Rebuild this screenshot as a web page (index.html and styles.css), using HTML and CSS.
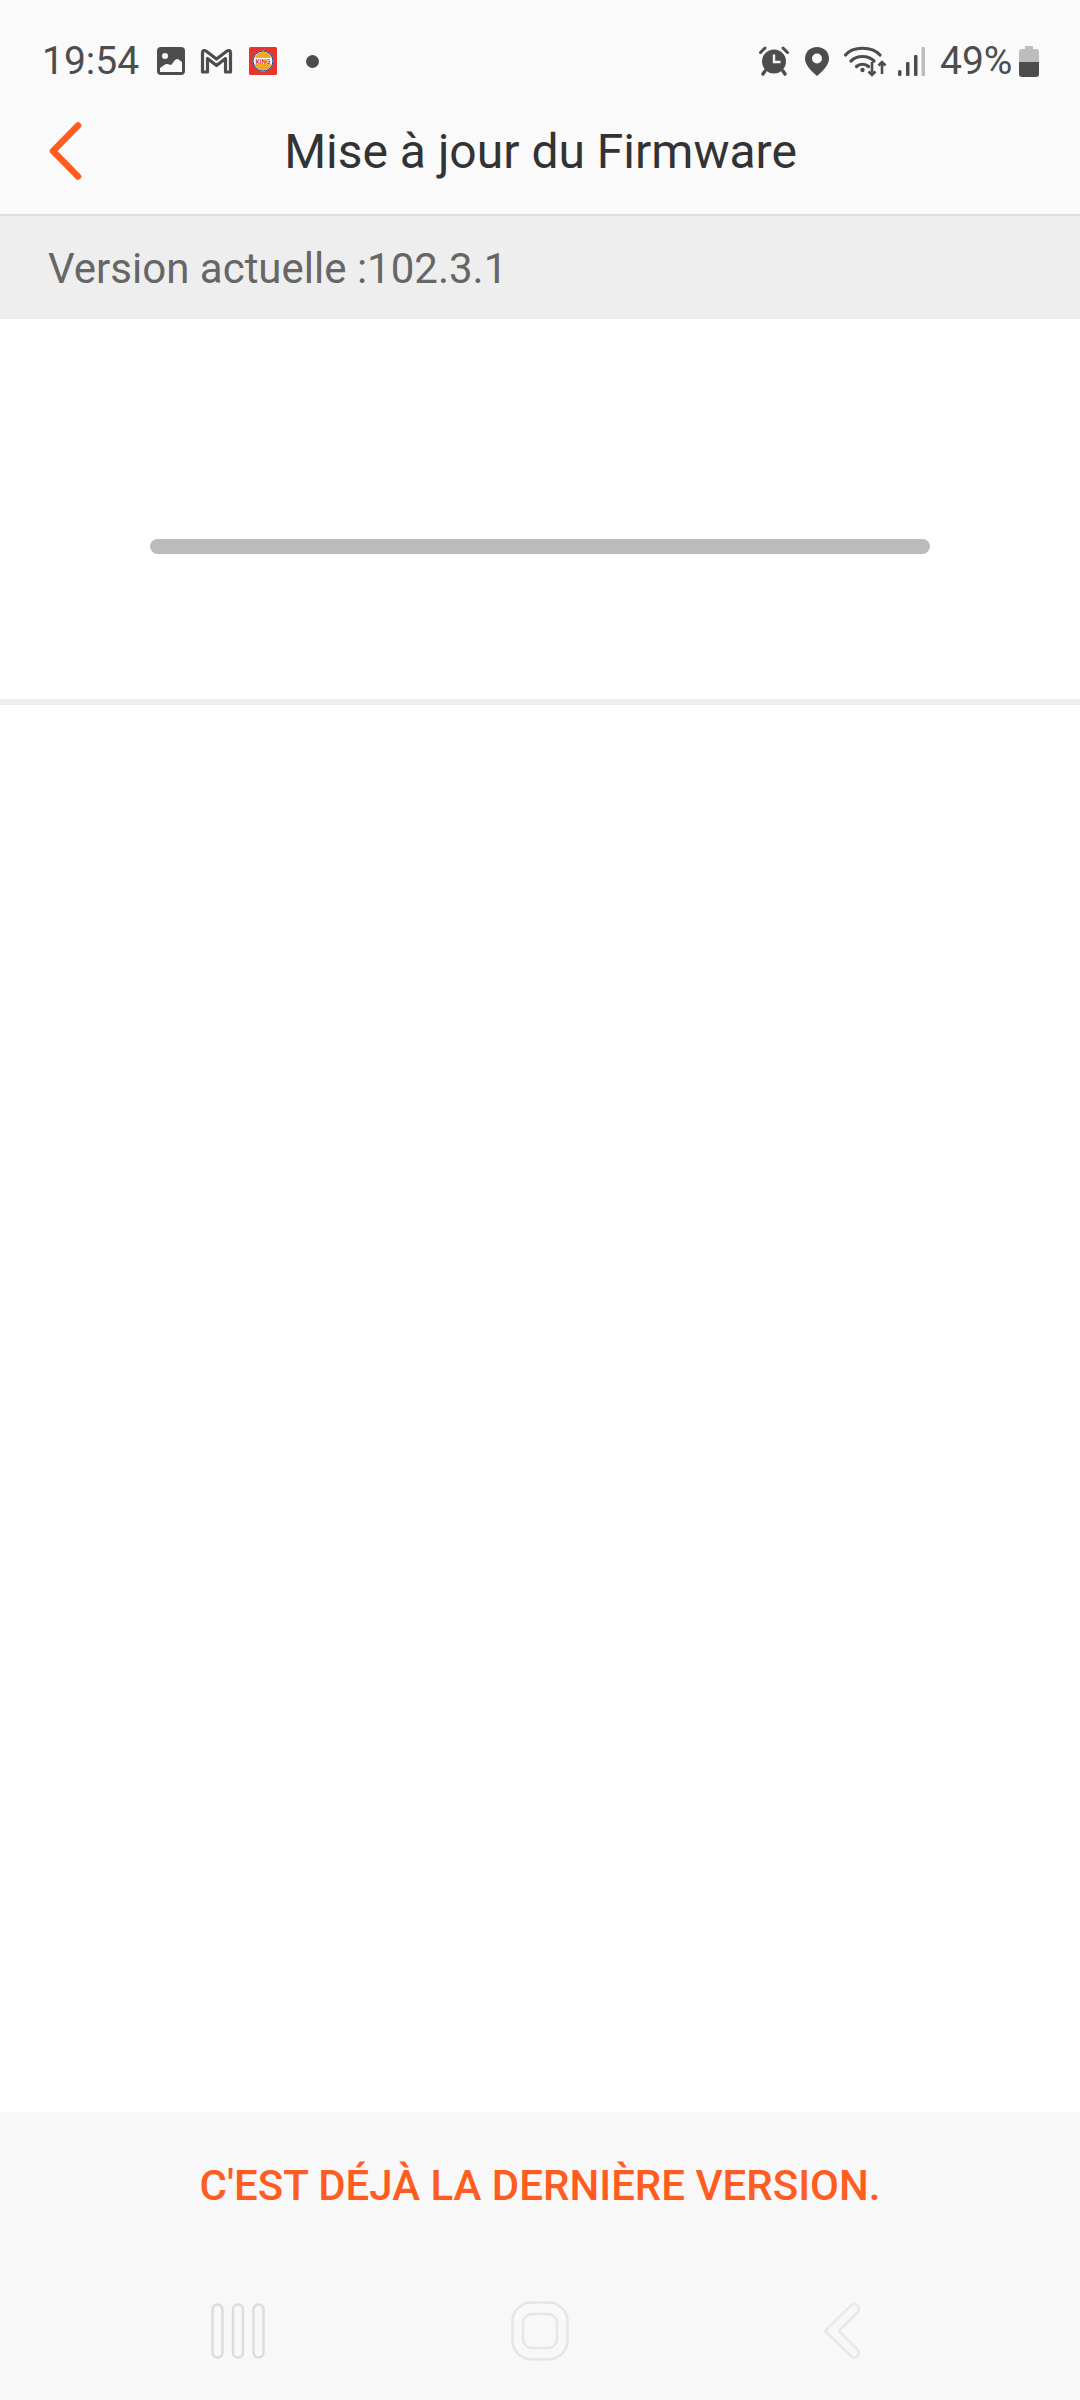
FILE: index.html
```html
<!DOCTYPE html>
<html lang="fr">
<head>
  <meta charset="UTF-8">
  <meta name="viewport" content="width=device-width, initial-scale=1.0">
  <title>Mise à jour du Firmware</title>
  <link rel="stylesheet" href="styles.css">
</head>
<body>
  <div class="page">
    <header class="top-bar">
      <div class="status-bar">
        <div class="status-left">
          <span class="clock">19:54</span>
          <!-- galerie -->
          <svg class="ico-gallery" viewBox="0 0 28 28"><rect width="28" height="28" rx="4" fill="#4d4d4d"/><circle cx="8" cy="9" r="3" fill="#fafafa"/><path d="M3 25v-4c3-2 5-4 7-4 2 0 3 1 4 1 2-2 4-6 6-6 2 0 3 2 5 3v10z" fill="#fafafa"/></svg>
          <!-- gmail -->
          <svg class="ico-gmail" viewBox="0 0 33 26"><path d="M2.500 24V4.500c0-2 2-2.500 3.500-1.500L16.500 11 27 3c1.500-1 3.500-.5 3.500 1.500V24h-5V10.500l-9 7-9-7V24z" fill="none" stroke="#4d4d4d" stroke-width="3.200" stroke-linejoin="round"/></svg>
          <!-- burger king -->
          <svg class="ico-bk" viewBox="0 0 28 28"><rect width="28" height="28" rx="1.500" fill="#e8352b"/><circle cx="14" cy="14" r="10.500" fill="#fff"/><circle cx="14" cy="14" r="10" fill="none" stroke="#1d4f9c" stroke-width="1.200"/><path d="M6 11c1-4 4-6 8-6s7 2 8 6z" fill="#f5a623"/><path d="M6 17h16c-1 4-4 6-8 6s-7-2-8-6z" fill="#f5a623"/><text class="bk-word" x="14" y="17">KING</text></svg>
          <span class="notif-dot"></span>
        </div>
        <div class="status-right">
          <!-- reveil -->
          <svg class="ico-alarm" viewBox="0 0 30 30"><path d="M1.500 6.500l4.500-4.500M28.500 6.500L24 2" stroke="#4d4d4d" stroke-width="3" stroke-linecap="round"/><path d="M6 25l-2 3M24 25l2 3" stroke="#4d4d4d" stroke-width="3.400" stroke-linecap="round"/><circle cx="15" cy="15.500" r="12" fill="#4d4d4d"/><path d="M15 8.500v7.500h6.500" fill="none" stroke="#fafafa" stroke-width="2.400"/></svg>
          <!-- position -->
          <svg class="ico-pin" viewBox="0 0 24 29"><path d="M12 0C5 0 0 5 0 11.500 0 18 6 24 12 29c6-5 12-11 12-17.500C24 5 19 0 12 0z" fill="#4d4d4d"/><circle cx="12" cy="11.500" r="5" fill="#fafafa"/></svg>
          <!-- wifi -->
          <svg class="ico-wifi" viewBox="0 0 44 32"><g fill="none" stroke="#4d4d4d" stroke-width="3.200" stroke-linecap="round"><path d="M1.500 10C9 1 28 1 36 10"/><path d="M7 16c6-6 17-6 23 0"/><path d="M12.500 21.500c3-3 9-3 12 0"/></g><circle cx="18.500" cy="25" r="2.200" fill="#4d4d4d"/><g fill="none" stroke="#4d4d4d" stroke-width="2.600"><path d="M28 17v13M24.500 26.500l3.500 3.500 3.500-3.500"/><path d="M38 29V17M34.500 20.500L38 17l3.500 3.500"/></g></svg>
          <!-- reseau -->
          <svg class="ico-signal" viewBox="0 0 27 29"><rect x="0" y="23" width="3.500" height="6" rx="1.500" fill="#4d4d4d"/><rect x="8" y="15" width="3.500" height="14" rx="1" fill="#4d4d4d"/><rect x="16" y="8" width="3.500" height="21" rx="1" fill="#4d4d4d"/><rect x="23.500" y="0" width="3.500" height="29" rx="1" fill="#bdbdbd"/></svg>
          <span class="battery-pct">49%</span>
          <!-- batterie -->
          <svg class="ico-battery" viewBox="0 0 20 31"><path d="M6 0h8v3h3c2 0 3 1 3 3v10H0V6c0-2 1-3 3-3h3z" fill="#bdbdbd"/><path d="M0 16h20v12c0 2-1 3-3 3H3c-2 0-3-1-3-3z" fill="#4d4d4d"/></svg>
        </div>
      </div>
      <nav class="toolbar">
        <svg class="ico-back" viewBox="0 0 33 58"><path d="M29 3.500L4 29l25 25.500" fill="none" stroke="#ff5c21" stroke-width="6.500" stroke-linecap="round" stroke-linejoin="round"/></svg>
        <h1>Mise à jour du Firmware</h1>
      </nav>
    </header>

    <div class="version-strip">Version actuelle :102.3.1</div>

    <section class="progress-box">
      <div class="progress-track"></div>
    </section>

    <main class="content"></main>

    <footer class="bottom">
      <div class="update-msg">C'EST DÉJÀ LA DERNIÈRE VERSION.</div>
      <div class="nav-keys">
        <svg class="key-recents" viewBox="0 0 54 56"><g fill="none" stroke="#dcdcdc" stroke-width="2.500"><rect x="1.500" y="1.500" width="10" height="53" rx="5"/><rect x="22" y="1.500" width="10" height="53" rx="5"/><rect x="42.500" y="1.500" width="10" height="53" rx="5"/></g></svg>
        <svg class="key-home" viewBox="0 0 58 60"><g fill="none" stroke="#e6e6e6" stroke-width="2.500"><rect x="1.500" y="1.500" width="55" height="57" rx="19"/><rect x="12" y="13" width="34" height="34" rx="9"/></g></svg>
        <svg class="key-back" viewBox="0 0 38 58"><path d="M28 3.500c2-2.500 8-1 8 3.500 0 1-.5 2-1 2.800L16 29l19 19.200c2 3 0 7.300-3.500 7.300-1.500 0-3-.5-4-2L2 29z" fill="none" stroke="#e8e8e8" stroke-width="2.500" stroke-linejoin="round"/></svg>
      </div>
    </footer>
  </div>
</body>
</html>
```

FILE: styles.css
```css
* {
  margin: 0;
  padding: 0;
  box-sizing: border-box;
}

body {
  font-family: 'Roboto', 'Liberation Sans', sans-serif;
  background: #ffffff;
}

svg {
  display: block;
  flex: none;
}

.page {
  width: 1080px;
  height: 2400px;
  display: flex;
  flex-direction: column;
}

/* Barre du haut */
.top-bar {
  height: 216px;
  background: #fafafa;
  border-bottom: 2px solid #dedede;
}

.status-bar {
  height: 88px;
  padding: 34px 41px 0 42px;
  display: flex;
  justify-content: space-between;
  align-items: center;
  color: #4d4d4d;
}

.status-left,
.status-right {
  display: flex;
  align-items: center;
}

.clock {
  font-size: 39px;
  width: 115px;
}

.ico-gallery { width: 28px; height: 28px; }
.ico-gmail { width: 33px; height: 26px; margin-left: 15px; }
.ico-bk { width: 28px; height: 28px; margin-left: 16px; }

.bk-word {
  font-size: 6.500px;
  font-weight: 700;
  text-anchor: middle;
  fill: #d9342b;
}

.notif-dot {
  width: 13px;
  height: 13px;
  margin-left: 29px;
  border-radius: 50%;
  background: #4d4d4d;
}

.ico-alarm { width: 30px; height: 30px; }
.ico-pin { width: 24px; height: 29px; margin-left: 16px; }
.ico-wifi { width: 44px; height: 32px; margin-left: 15px; }
.ico-signal { width: 27px; height: 29px; margin-left: 10px; }

.battery-pct {
  font-size: 39px;
  margin-left: 15px;
  width: 79px;
}

.ico-battery { width: 20px; height: 31px; }

.toolbar {
  height: 126px;
  padding-left: 49px;
  display: flex;
  align-items: center;
}

.ico-back {
  width: 33px;
  height: 58px;
}

.toolbar h1 {
  width: 917px;
  text-align: center;
  font-size: 48px;
  font-weight: 400;
  color: #333333;
}

.version-strip {
  height: 103px;
  padding: 2px 0 0 48px;
  display: flex;
  align-items: center;
  background: #eeeeee;
  color: #666666;
  font-size: 42px;
}

.progress-box {
  height: 386px;
  padding: 220px 150px 0;
  border-bottom: 6px solid #eeeeee;
}

.progress-track {
  height: 15px;
  border-radius: 8px;
  background: #bbbbbb;
}

.content {
  flex: 1;
}

/* Bas de page */
.bottom {
  height: 288px;
  background: #f8f8f8;
}

.update-msg {
  height: 146px;
  display: flex;
  justify-content: center;
  align-items: center;
  color: #ff5c21;
  font-size: 42px;
  font-weight: 500;
}

.nav-keys {
  height: 142px;
  padding-top: 3px;
  display: grid;
  grid-template-columns: repeat(3, 302px);
  justify-content: center;
  justify-items: center;
  align-items: center;
}

.key-recents { width: 54px; height: 56px; }
.key-home { width: 58px; height: 60px; }
.key-back { width: 38px; height: 58px; }
```
